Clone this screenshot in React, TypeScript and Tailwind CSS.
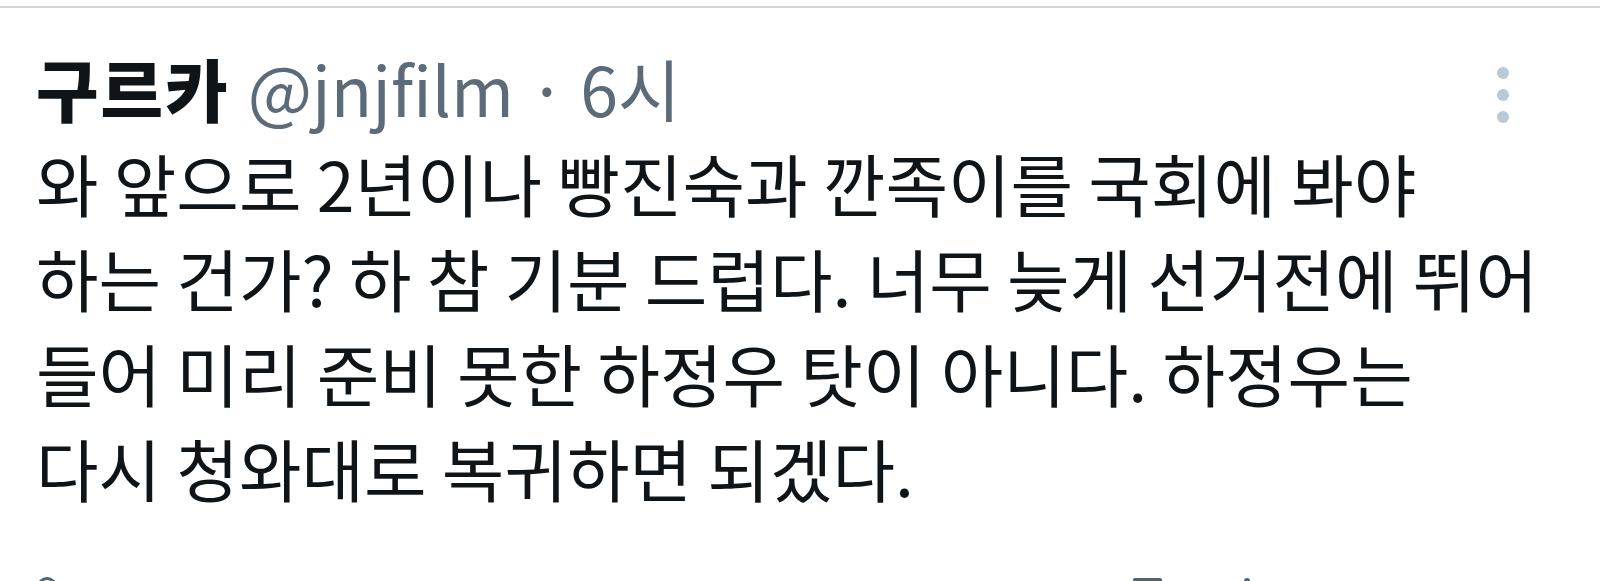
import React from "react";

export default function App() {
  const lines = [
    "와 앞으로 2년이나 빵진숙과 깐족이를 국회에 봐야",
    "하는 건가? 하 참 기분 드럽다. 너무 늦게 선거전에 뛰어",
    "들어 미리 준비 못한 하정우 탓이 아니다. 하정우는",
    "다시 청와대로 복귀하면 되겠다.",
  ];
  return (
    <div className="relative w-[1600px] h-[581px] overflow-hidden bg-white font-['Noto_Sans_CJK_KR',sans-serif] text-[#0f1419]">
      <div className="h-[6px]" />
      <div className="h-[2px] bg-[#d4d4d4]" />
      <div className="flex items-start justify-between pl-[36px] pr-[91px] pt-[40px]">
        <div className="flex items-baseline text-[68px] leading-[80px]">
          <span className="font-black tracking-[2px]">구르카</span>
          <span className="ml-[18px] text-[#5b6b7a]">@jnjfilm</span>
          <span className="ml-[14px] text-[#5b6b7a]">·</span>
          <span className="ml-[14px] text-[#5b6b7a]">6시</span>
        </div>
        <div className="flex flex-col items-center gap-[10px] pt-[19px]">
          <div className="w-[12px] h-[12px] rounded-full bg-[#b9c9d6]" />
          <div className="w-[12px] h-[12px] rounded-full bg-[#b9c9d6]" />
          <div className="w-[12px] h-[12px] rounded-full bg-[#b9c9d6]" />
        </div>
      </div>
      <div className="pl-[36px] pt-[7px] text-[68px] leading-[95px]">
        {lines.map((l, i) => (
          <div key={i} className="whitespace-nowrap">{l}</div>
        ))}
      </div>
      <div className="absolute left-[37px] top-[577px] w-[20px] h-[20px] rounded-full border-[3px] border-[#536471]" />
      <div className="absolute left-[1133px] top-[578px] w-[29px] h-[6px] rounded-[2px] bg-[#536471]" />
      <div className="absolute left-[1244px] top-[578px] w-[6px] h-[6px] rounded-full bg-[#536471]" />
    </div>
  );
}
